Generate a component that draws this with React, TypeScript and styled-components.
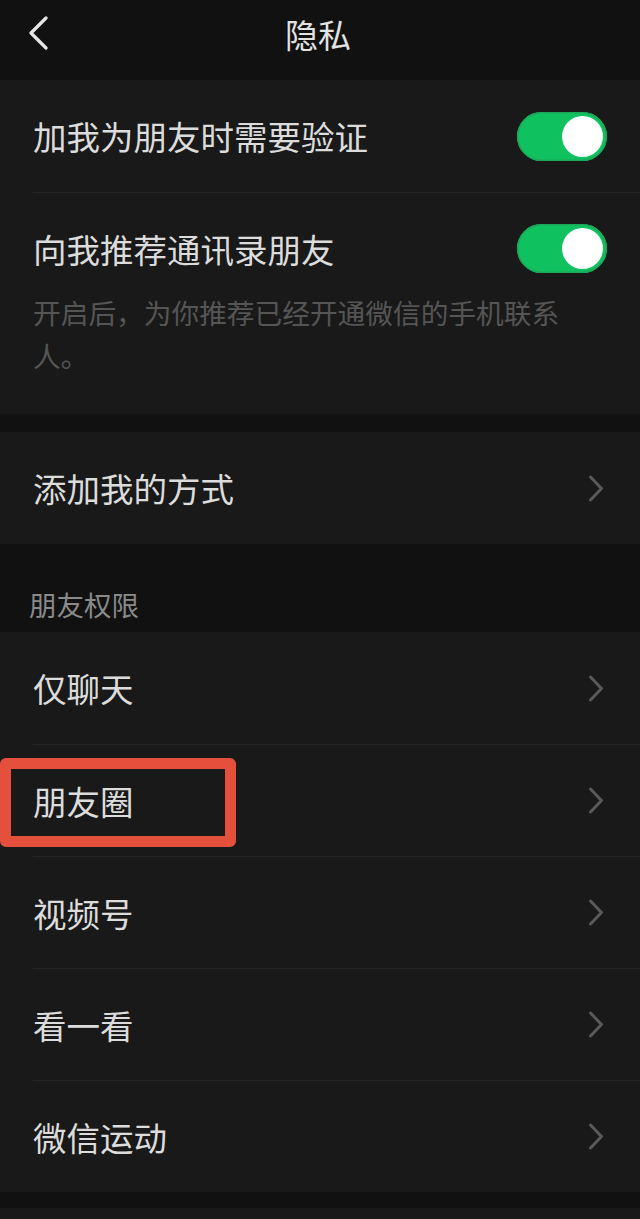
import React from 'react';
import styled, { createGlobalStyle } from 'styled-components';

const GlobalStyle = createGlobalStyle`
  html, body {
    margin: 0;
    padding: 0;
    background: #111111;
  }
  body {
    font-family: "Noto Sans CJK SC", "Noto Sans", sans-serif;
    -webkit-font-smoothing: antialiased;
  }
`;

const Page = styled.div`
  width: 640px;
  min-height: 1219px;
  background: #111111;
  overflow: hidden;
`;

const Header = styled.div`
  height: 80px;
  padding-bottom: 13px;
  box-sizing: border-box;
  display: flex;
  align-items: center;
  justify-content: center;
  position: relative;
`;

const BackButton = styled.div`
  position: absolute;
  left: 27px;
  top: 16px;
  width: 24px;
  height: 34px;
  display: flex;
  align-items: center;
`;

const Title = styled.div`
  color: #e2e2e2;
  font-size: 33px;
  line-height: 40px;
  letter-spacing: 0;
  margin-left: -4px;
`;

const Section = styled.div<{ gap?: number }>`
  background: #191919;
  margin-top: ${(p) => p.gap ?? 0}px;
`;

const SectionLabel = styled.div`
  padding: 40px 29px 8px;
  height: 40px;
  line-height: 40px;
  color: #8a8a8a;
  font-size: 27.5px;
`;

const Row = styled.div`
  position: relative;
  padding-left: 33px;
`;

const RowBody = styled.div<{ first?: boolean; right?: number }>`
  height: 112px;
  display: flex;
  align-items: center;
  justify-content: space-between;
  padding-right: ${(p) => p.right ?? 36}px;
  box-sizing: border-box;
  border-top: ${(p) => (p.first ? 'none' : '1px solid #242424')};
`;

const Label = styled.span`
  color: #dcdcdc;
  font-size: 33.5px;
  line-height: 48px;
`;

const TallBody = styled.div`
  border-top: 1px solid #242424;
  padding: 31px 33px 37px 0;
`;

const TitleLine = styled.div`
  display: flex;
  align-items: center;
  justify-content: space-between;
`;

const Desc = styled.div`
  margin-top: 18px;
  color: #555555;
  font-size: 27.7px;
  line-height: 43px;
  padding-right: 40px;
`;

const Toggle = styled.div<{ on?: boolean }>`
  width: 90px;
  height: 49px;
  border-radius: 25px;
  background: ${(p) => (p.on ? '#0fc15f' : '#3a3a3a')};
  box-shadow: inset 0 0 0 1.5px #1aa95b;
  position: relative;
  flex-shrink: 0;
`;

const Knob = styled.div`
  position: absolute;
  right: 4px;
  top: 4px;
  width: 41px;
  height: 41px;
  border-radius: 50%;
  background: #ffffff;
`;

const Highlight = styled.div`
  position: absolute;
  left: 0;
  top: 14px;
  width: 236px;
  height: 89px;
  box-sizing: border-box;
  border: 11px solid #e5503c;
  border-radius: 6px;
  pointer-events: none;
`;

const Chevron = () => (
  <svg width="16" height="27" viewBox="0 0 16 27">
    <path d="M2.5 2 L13.5 13.5 L2.5 25" fill="none" stroke="#5a5a5a" strokeWidth="3" strokeLinecap="round" strokeLinejoin="round" />
  </svg>
);

const BackIcon = () => (
  <svg width="22" height="34" viewBox="0 0 22 34">
    <path d="M19 2 L4 17 L19 32" fill="none" stroke="#e6e6e6" strokeWidth="3.2" strokeLinecap="round" strokeLinejoin="round" />
  </svg>
);

const NavRow = ({ label, first, marked }: { label: string; first?: boolean; marked?: boolean }) => (
  <Row>
    <RowBody first={first}>
      <Label>{label}</Label>
      <Chevron />
    </RowBody>
    {marked && <Highlight />}
  </Row>
);

export default function App() {
  const permissions = ['仅聊天', '朋友圈', '视频号', '看一看', '微信运动'];
  return (
    <Page>
      <GlobalStyle />
      <Header>
        <BackButton>
          <BackIcon />
        </BackButton>
        <Title>隐私</Title>
      </Header>

      <Section>
        <Row>
          <RowBody first right={33}>
            <Label>加我为朋友时需要验证</Label>
            <Toggle on>
              <Knob />
            </Toggle>
          </RowBody>
        </Row>
        <Row>
          <TallBody>
            <TitleLine>
              <Label>向我推荐通讯录朋友</Label>
              <Toggle on>
                <Knob />
              </Toggle>
            </TitleLine>
            <Desc>开启后，为你推荐已经开通微信的手机联系人。</Desc>
          </TallBody>
        </Row>
      </Section>

      <Section gap={18}>
        <NavRow label="添加我的方式" first />
      </Section>

      <SectionLabel>朋友权限</SectionLabel>

      <Section>
        {permissions.map((p, i) => (
          <NavRow key={p} label={p} first={i === 0} marked={p === '朋友圈'} />
        ))}
      </Section>

      <Section gap={16} style={{ height: 60 }} />
    </Page>
  );
}
